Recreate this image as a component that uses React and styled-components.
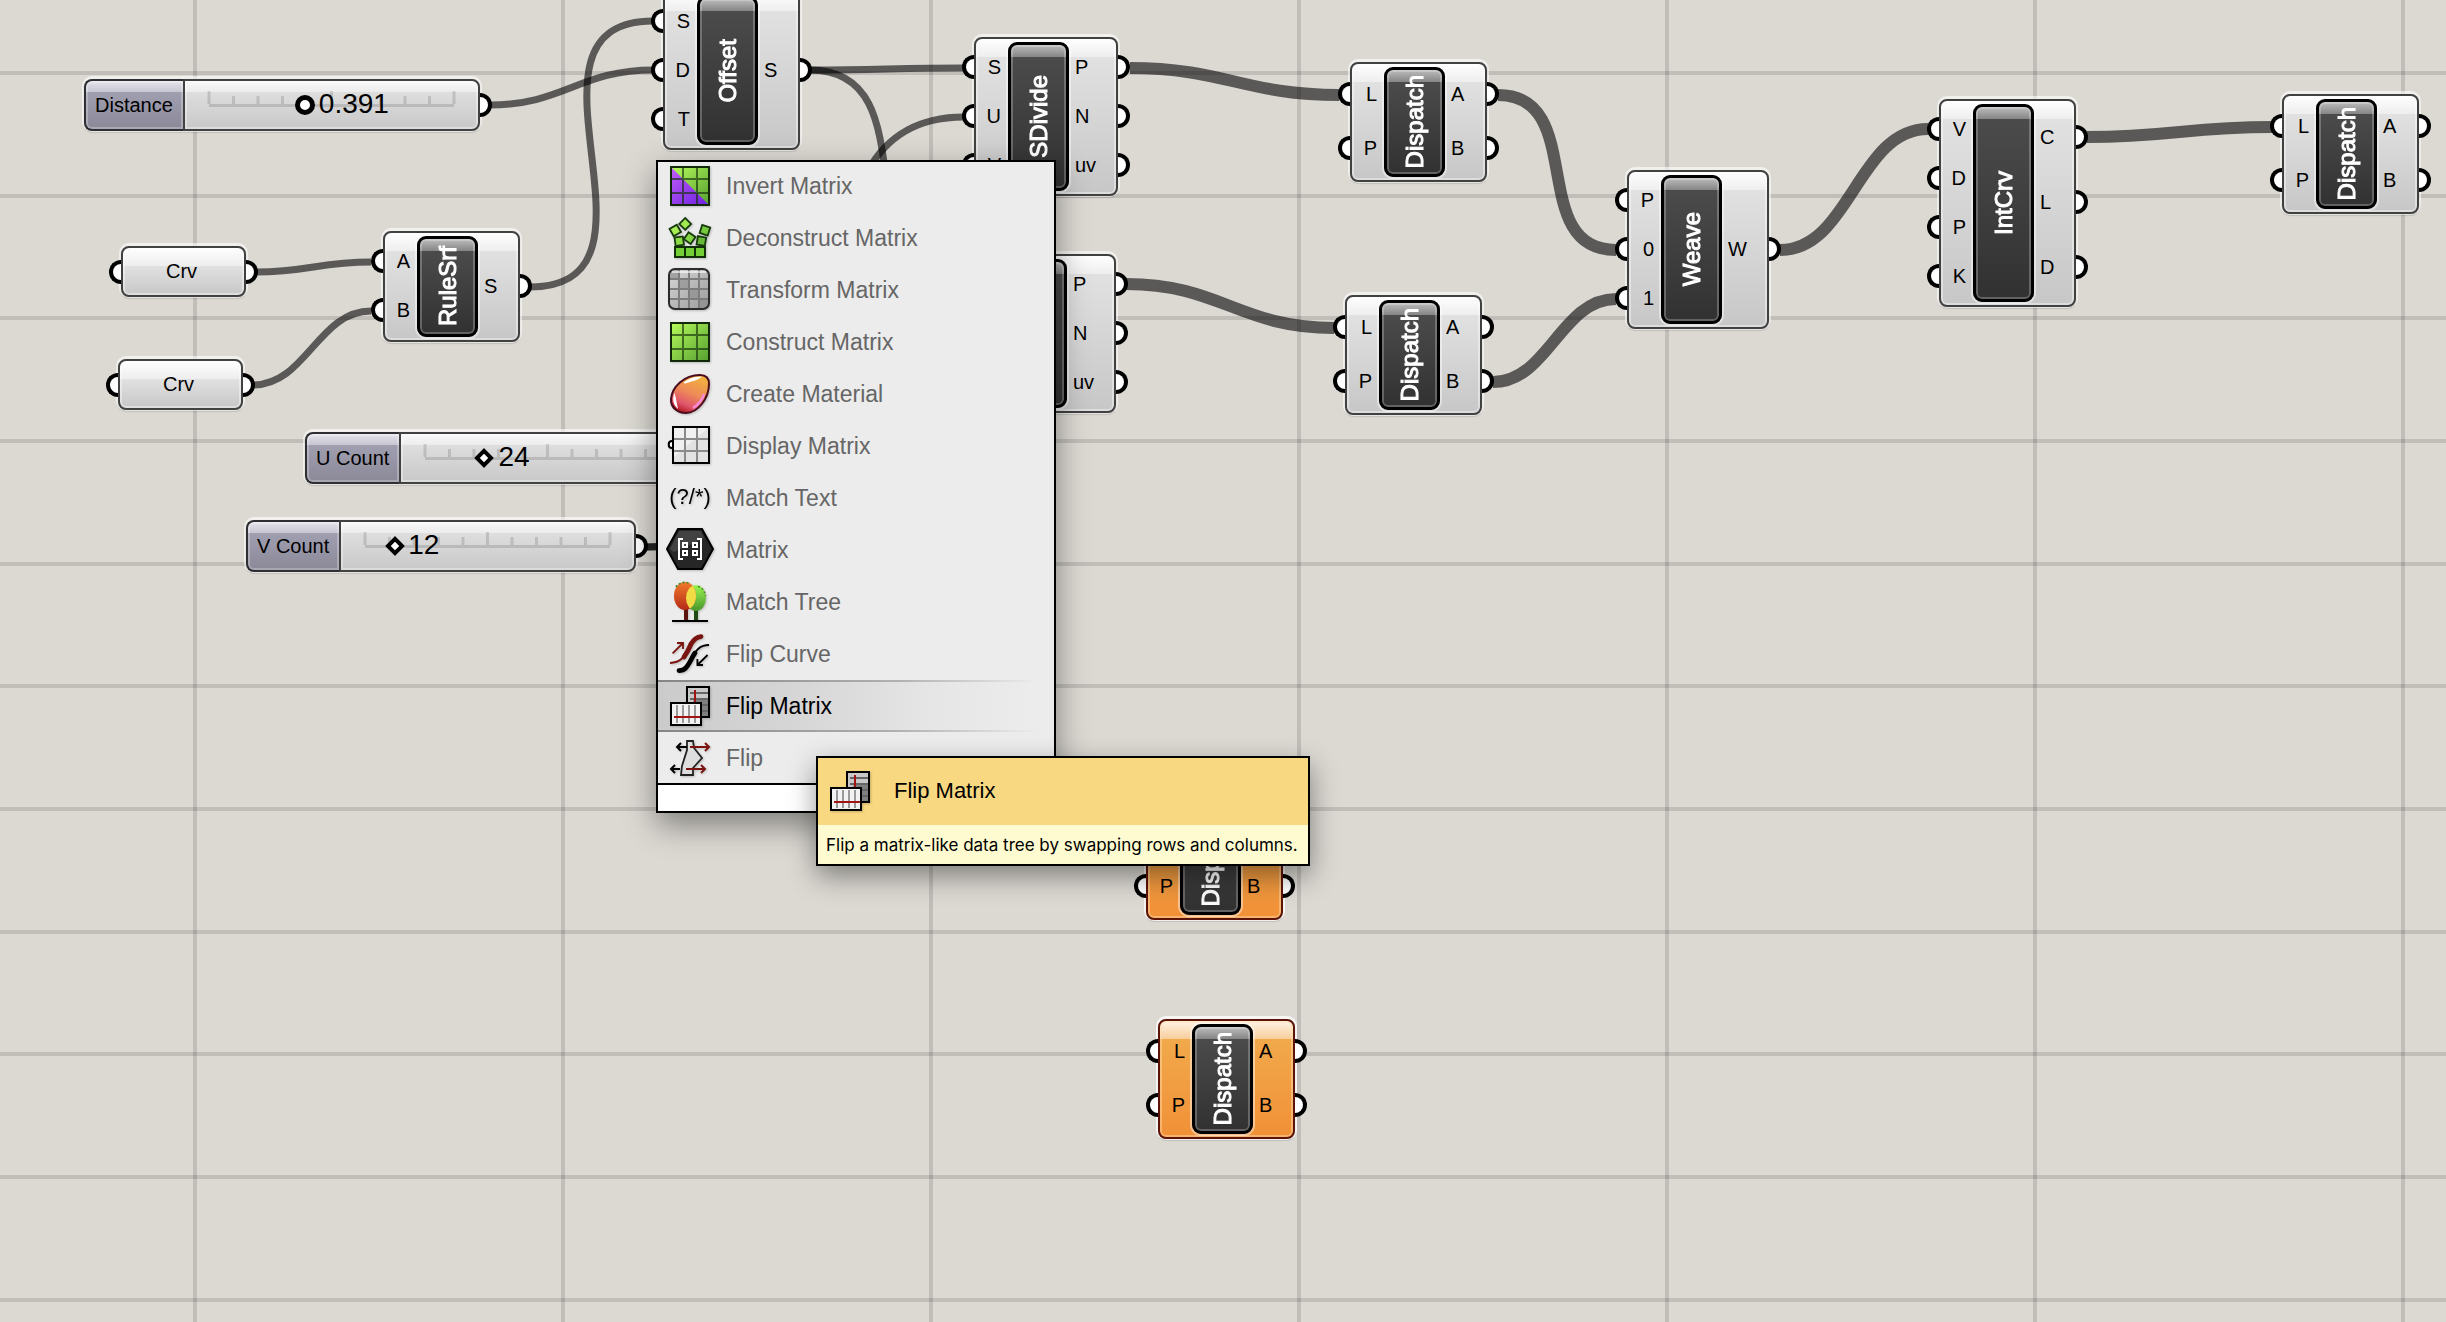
import React, { useState } from "react";
import styled, { createGlobalStyle, css } from "styled-components";

const GlobalStyle = createGlobalStyle`
  *, *::before, *::after { box-sizing: border-box; }
  body {
    margin: 0;
    background: #dcd9d3;
    font-family: "Liberation Sans", Arial, Helvetica, sans-serif;
    color: #000;
  }
`;

/* ---------- canvas ---------- */

const Canvas = styled.main`
  position: relative;
  width: 100%;
  height: 100vh;
  overflow: hidden;
  background: #dcd9d3;
`;

const Drawing = styled.svg`
  display: block;
  width: 100%;
  height: 100%;
`;

const OnCanvas = styled.section`
  position: absolute;
  left: ${(p) => p.$x}px;
  top: ${(p) => p.$y}px;
`;

/* ---------- component nodes ---------- */

const grey = css`
  border-color: #414141;
  background: linear-gradient(#fefefe 0, #eeeeee 18px, #e1e1e1 18px, #c7c7c7 100%);
  box-shadow:
    inset 0 0 0 2px rgba(255, 255, 255, 0.4),
    0 -1px 0 2px rgba(255, 255, 255, 0.6),
    0 1px 1px 1px rgba(0, 0, 0, 0.12);
`;

const orange = css`
  border-color: #5c1408;
  background: linear-gradient(#fff4e6 0, #f7cd9a 18px, #f1a94b 18px, #f19037 100%);
  box-shadow:
    inset 0 0 0 2px rgba(255, 225, 180, 0.45),
    0 -1px 0 2px rgba(255, 255, 255, 0.75),
    0 1px 1px 1px rgba(0, 0, 0, 0.12);
`;

const Body = styled.div`
  display: flex;
  height: ${(p) => p.$height}px;
  border: 2px solid;
  border-radius: 8px;
  ${(p) => (p.$selected ? orange : grey)}
`;

const Ports = styled.ul`
  display: flex;
  flex-direction: column;
  min-width: ${(p) => (p.$side === "in" ? 32 : 40)}px;
  margin: 0;
  padding: 3px 0 5px;
  list-style: none;
`;

const grip = css`
  content: "";
  position: absolute;
  top: 50%;
  width: 12px;
  height: 24px;
  margin-top: -12px;
  border: 4px solid #000;
  background: #fff;
`;

const gripLeft = css`
  ${grip}
  right: 100%;
  border-right: 0;
  border-radius: 12px 0 0 12px;
`;

const gripRight = css`
  ${grip}
  left: 100%;
  border-left: 0;
  border-radius: 0 12px 12px 0;
`;

const Port = styled.li`
  position: relative;
  display: flex;
  flex: 1;
  align-items: center;
  font-size: 20px;
  line-height: 24px;
  ${(p) =>
    p.$side === "in"
      ? css`
          justify-content: flex-end;
          margin-left: -2px;
          padding-right: 7px;
          &::before { ${gripLeft} }
        `
      : css`
          margin-right: -2px;
          padding: 0 22px 0 6px;
          &::after { ${gripRight} }
        `}
`;

const Core = styled.div`
  display: flex;
  align-items: center;
  justify-content: center;
  width: 61px;
  margin: 3px 0;
  border: 3px solid #000;
  border-radius: 9px;
  background: linear-gradient(#bdbdbd 0, #858585 12px, #4b4b4b 12px, #313131 100%);
  box-shadow:
    inset 0 0 0 2px rgba(255, 255, 255, 0.24),
    0 0 0 2px rgba(255, 255, 255, 0.45);
`;

const CoreName = styled.span`
  writing-mode: vertical-rl;
  transform: rotate(180deg);
  color: #fff;
  font-size: 24px;
  line-height: 28px;
  -webkit-text-stroke: 1px #fff;
`;

function Node({ x, y, height, name, inputs, outputs, selected }) {
  return (
    <OnCanvas $x={x} $y={y} aria-label={name}>
      <Body $height={height} $selected={selected}>
        <Ports $side="in">
          {inputs.map((port) => <Port key={port} $side="in">{port}</Port>)}
        </Ports>
        <Core><CoreName>{name}</CoreName></Core>
        <Ports $side="out">
          {outputs.map((port) => <Port key={port} $side="out">{port}</Port>)}
        </Ports>
      </Body>
    </OnCanvas>
  );
}

const ParamBody = styled.div`
  position: relative;
  display: flex;
  align-items: center;
  justify-content: center;
  width: 125px;
  height: 51px;
  padding-right: 4px;
  border: 2px solid;
  border-radius: 8px;
  font-size: 20px;
  ${grey}
  &::before { ${gripLeft} margin-right: 2px; }
  &::after { ${gripRight} margin-left: 2px; }
`;

/* ---------- number sliders ---------- */

const SliderBox = styled.div`
  position: relative;
  display: flex;
  height: 52px;
  border-radius: 8px;
  box-shadow: 0 -1px 0 2px rgba(255, 255, 255, 0.6), 0 1px 1px 1px rgba(0, 0, 0, 0.12);
  &::after { ${gripRight} }
`;

const SliderLabel = styled.label`
  display: flex;
  align-items: center;
  padding: 0 10px 0 9px;
  border: 2px solid #2e2e33;
  border-right: 0;
  border-radius: 8px 0 0 8px;
  background: linear-gradient(#e4e4ec 0, #c6c5d1 11px, #a09fb0 11px, #8b8998 100%);
  box-shadow: inset 0 0 0 2px rgba(255, 255, 255, 0.25);
  font-size: 20px;
  line-height: 24px;
`;

const Track = styled.div`
  position: relative;
  display: grid;
  place-items: center;
  width: 297px;
  border: 2px solid #414141;
  border-radius: 0 8px 8px 0;
  background: linear-gradient(#fafafa 0, #ececec 11px, #dedede 11px, #c8c8c8 100%);
  box-shadow: inset 0 0 0 2px rgba(255, 255, 255, 0.35);
`;

const Ticks = styled.svg`
  grid-area: 1 / 1;
  display: block;
  width: 249px;
  height: 34px;
`;

const thumbSize = { round: 20, diamond: 14 };

const Range = styled.input`
  grid-area: 1 / 1;
  appearance: none;
  width: ${(p) => 245 + thumbSize[p.$shape]}px;
  height: 32px;
  margin: 0;
  background: transparent;
  z-index: 1;
  &::-webkit-slider-thumb {
    appearance: none;
    width: ${(p) => thumbSize[p.$shape]}px;
    height: ${(p) => thumbSize[p.$shape]}px;
    border: ${(p) => (p.$shape === "round" ? 5 : 4)}px solid #000;
    border-radius: ${(p) => (p.$shape === "round" ? "50%" : "0")};
    background: #fff;
    transform: ${(p) => (p.$shape === "round" ? "none" : "rotate(45deg)")};
  }
`;

const Value = styled.output`
  position: absolute;
  top: 7px;
  font-size: 28px;
  line-height: 32px;
  pointer-events: none;
`;

function NumberSlider({ id, x, y, label, initial, max, step, shape }) {
  const [value, setValue] = useState(initial);
  return (
    <OnCanvas $x={x} $y={y}>
      <SliderBox>
        <SliderLabel htmlFor={id}>{label}</SliderLabel>
        <Track>
          <Ticks viewBox="0 0 249 34" aria-hidden="true">
            <g stroke="#000" strokeOpacity=".13" strokeWidth="3" fill="none">
              <path d="M2 17.500H247" />
              {Array.from({ length: 11 }, (_, i) => (
                <path key={i} d={`M${2 + i * 24.5} ${i % 5 ? 8 : 3}V16`} />
              ))}
            </g>
          </Ticks>
          <Range
            id={id}
            type="range"
            min="0"
            max={max}
            step={step}
            value={value}
            $shape={shape}
            onChange={(e) => setValue(e.target.value)}
          />
          <Value htmlFor={id} style={{ left: 38 + Math.round((value / max) * 245) }}>{value}</Value>
        </Track>
      </SliderBox>
    </OnCanvas>
  );
}

/* ---------- wires ---------- */

const gridColumns = [195, 563, 931, 1299, 1667, 2035, 2403];
const gridRows = [73, 196, 318, 441, 564, 686, 809, 932, 1054, 1177, 1300];

const wires = [
  { from: [490, 105], to: [653, 70] },
  { from: [256, 272], to: [371, 262] },
  { from: [253, 385], to: [371, 311] },
  { from: [530, 287], to: [653, 21] },
  { from: [810, 70], to: [964, 68] },
  { from: [810, 70], to: [962, 284] },
  { from: [706, 459], to: [964, 117] },
  { from: [646, 547], to: [964, 166] },
  { from: [646, 547], to: [962, 382] },
  { from: [1130, 68], to: [1339, 95], list: true },
  { from: [1126, 284], to: [1334, 328], list: true },
  { from: [1498, 95], to: [1616, 250], list: true },
  { from: [1493, 382], to: [1616, 299], list: true },
  { from: [1780, 250], to: [1928, 129], list: true },
  { from: [2087, 137], to: [2272, 127], list: true },
];

function wirePath([x1, y1], [x2, y2]) {
  const reach = Math.round(Math.max((x2 - x1) * 0.45, Math.abs(y2 - y1) * 0.58));
  return `M${x1} ${y1}C${x1 + reach} ${y1} ${x2 - reach} ${y2} ${x2} ${y2}`;
}

/* ---------- icons ---------- */

const Glyph = styled.svg`
  display: block;
  flex: none;
  width: 48px;
  height: 48px;
  filter: drop-shadow(1px 1px 1px rgba(0, 0, 0, 0.2));
`;

function GreenGrid() {
  return (
    <>
      <defs>
        <linearGradient id="leaf" x1="0" y1="0" x2="1" y2="1">
          <stop offset="0" stopColor="#b8fb5c" />
          <stop offset="1" stopColor="#559f30" />
        </linearGradient>
      </defs>
      <rect x="2.5" y="2.5" width="19" height="19" fill="url(#leaf)" />
    </>
  );
}

const gridLines = (
  <>
    <path d="M8.5 3V21M15.5 3V21M3 8.5H21M3 15.5H21" stroke="#14300a" strokeOpacity=".65" />
    <rect x="2.5" y="2.5" width="19" height="19" fill="none" stroke="#12280a" />
  </>
);

function Block({ x, y, turn, fill }) {
  return (
    <rect
      x={x - 2}
      y={y - 2}
      width="4.2"
      height="4.2"
      transform={`rotate(${turn} ${x} ${y})`}
      fill={fill}
      stroke="#173a0c"
      strokeWidth=".9"
    />
  );
}

const icons = {
  invert: (
    <>
      <GreenGrid />
      <defs>
        <linearGradient id="violet" x1="0" y1="0" x2="1" y2="1">
          <stop offset="0" stopColor="#c05cf8" />
          <stop offset="1" stopColor="#6d22e0" />
        </linearGradient>
      </defs>
      <path d="M3 3L21 21H3Z" fill="url(#violet)" />
      {gridLines}
    </>
  ),
  deconstruct: (
    <>
      <Block x={4.5} y={8.2} turn={-30} fill="#a6ee54" />
      <Block x={9.6} y={4.8} turn={45} fill="#a0ea50" />
      <Block x={19.4} y={8} turn={18} fill="#76c83e" />
      <Block x={6.500} y={13.5} turn={-8} fill="#8cdc46" />
      <Block x={17.6} y={13.4} turn={10} fill="#68b838" />
      <Block x={11.8} y={11.9} turn={35} fill="#84d444" />
      <path d="M4.5 16.5H19.5V21.5H4.5Z" fill="#74cf36" stroke="#12300a" />
      <path d="M9.5 16.5V21.5M14.5 16.5V21.5" stroke="#12300a" />
    </>
  ),
  transform: (
    <>
      <defs>
        <linearGradient id="steel" x1="0" y1="0" x2="1" y2="1">
          <stop offset="0" stopColor="#d8d8d8" />
          <stop offset="1" stopColor="#9a9a9a" />
        </linearGradient>
      </defs>
      <rect x="1.5" y="1.5" width="20" height="20" rx="3" fill="url(#steel)" />
      <path d="M2 2H6.500V6H2ZM7 7H11V11H7ZM12 12H16.500V16H12ZM17 17H21V21H17Z" fill="#8f8f8f" opacity=".7" />
      <path d="M6.500 2V21M11.500 2V21M16.500 2V21M2 6.500H21M2 11.500H21M2 16.500H21" stroke="#7c7c7c" />
      <path d="M3 3H20" stroke="#fff" opacity=".6" />
      <rect x="1.5" y="1.5" width="20" height="20" rx="3" fill="none" stroke="#2c2c2c" />
    </>
  ),
  construct: (
    <>
      <GreenGrid />
      {gridLines}
    </>
  ),
  material: (
    <>
      <defs>
        <linearGradient id="amber" x1=".8" y1="0" x2=".35" y2="1">
          <stop offset="0" stopColor="#f0b53a" />
          <stop offset=".5" stopColor="#ee8a58" />
          <stop offset=".8" stopColor="#e0566c" />
          <stop offset="1" stopColor="#b51b27" />
        </linearGradient>
      </defs>
      <path
        d="M2.500 14.500C3 8.500 9 2.500 17 2.500C20 2.500 21.500 4 21.500 7C21.500 14 16 21.500 10 21.500C5.500 21.500 2.200 18.500 2.500 14.500Z"
        fill="url(#amber)"
        stroke="#4a0c1c"
      />
      <path d="M9 6.500C11.500 4.500 14 3.600 17 3.700C15 5 12 5.600 9 6.500Z" fill="#fff" stroke="#fff" strokeWidth=".6" />
      <path d="M4.200 12.500C3.500 15 4 17 5.500 18.500C5 16.500 4.800 14.500 4.200 12.500Z" fill="#fff" stroke="#fff" strokeWidth=".6" />
      <path d="M13.500 19C16 17.500 18 15 19 12" stroke="#f58ad8" strokeWidth="1.200" fill="none" />
    </>
  ),
  display: (
    <>
      <path d="M3 9.500C.8 9.500.8 13 3 13" fill="#fff" stroke="#000" />
      <rect x="3.500" y="2.500" width="18" height="18" fill="#f0f0f0" />
      <path d="M4 17.500L21 3V20H4Z" fill="#d4d4d4" opacity=".5" />
      <path d="M9.500 3V20M15.500 3V20M4 8.500H21M4 14.500H21" stroke="#8a8a8a" />
      <rect x="3.500" y="2.500" width="18" height="18" fill="none" stroke="#000" />
    </>
  ),
  text: (
    <text
      x="12"
      y="15"
      textAnchor="middle"
      fontFamily='"Liberation Sans", Arial, sans-serif'
      fontSize="11"
    >
      (?/*)
    </text>
  ),
  matrix: (
    <>
      <path d="M6 1.500H18L23.500 11.500L18 21.500H6L.5 11.500Z" fill="#262626" stroke="#000" />
      <path d="M6.500 2.500H17.500L19 6L4 13L2 11.500Z" fill="#fff" opacity=".13" />
      <path d="M8.500 6.500H6.500V16.500H8.500M15.500 6.500H17.500V16.500H15.500" stroke="#fff" fill="none" />
      <path d="M8.500 8.500H10.500V10.500H8.500ZM13.500 8.500H15.500V10.500H13.500ZM8.500 12.500H10.500V14.500H8.500ZM13.500 12.500H15.500V14.500H13.500Z" stroke="#fff" fill="none" />
    </>
  ),
  tree: (
    <>
      <defs>
        <linearGradient id="rust" x1="0" y1="0" x2="0" y2="1">
          <stop offset="0" stopColor="#f07a2c" />
          <stop offset="1" stopColor="#b52a16" />
        </linearGradient>
        <linearGradient id="lime" x1="0" y1="0" x2="0" y2="1">
          <stop offset="0" stopColor="#9bf552" />
          <stop offset="1" stopColor="#48962c" />
        </linearGradient>
        <clipPath id="crown"><ellipse cx="9.500" cy="9" rx="5.500" ry="7" /></clipPath>
      </defs>
      <path d="M3 21.500H21" stroke="#000" />
      <path d="M10 14V21" stroke="#5a120c" strokeWidth="2" />
      <path d="M15 15V21" stroke="#1f4a14" strokeWidth="2" />
      <ellipse cx="15" cy="10" rx="5" ry="6.500" fill="url(#lime)" />
      <ellipse cx="9.500" cy="9" rx="5.500" ry="7" fill="url(#rust)" />
      <ellipse cx="15" cy="10" rx="5" ry="6.500" fill="#f2dc46" clipPath="url(#crown)" />
      <path d="M5 4.500C6.500 2.200 9.500 1.600 12 2.800M16 4.200C18.500 5 19.500 7 19.700 9" stroke="#4b8a24" strokeWidth=".8" strokeDasharray="1 1" fill="none" />
    </>
  ),
  curve: (
    <>
      <path d="M2 16.500C8 16.500 10 12 12 8.500C13.500 5 15 3 18.500 3" stroke="#7a1410" strokeWidth="1" fill="none" />
      <path d="M9 13.500C10.500 11.500 11.500 9.500 12.500 7C14 4.500 15.500 3.500 17.500 3.300" stroke="#7a1410" strokeWidth="2.400" strokeLinecap="round" fill="none" />
      <path d="M6.500 20.500C10.500 20.500 11.500 17 13 14C15 10 17 7.500 21.500 7.500" stroke="#000" strokeWidth="1" fill="none" />
      <path d="M6.500 20.300C10 20.300 11 17.500 12.500 15C13.500 13 14 12 14.500 11.500" stroke="#000" strokeWidth="2.400" strokeLinecap="round" fill="none" />
      <path d="M3.300 11.700L8.500 6.500M5.500 6.500H8.500V9.500" stroke="#7a1410" strokeWidth=".9" fill="none" />
      <path d="M20.800 12.500L15.700 17.500M15.700 14.500V17.500H18.500" stroke="#000" strokeWidth=".9" fill="none" />
    </>
  ),
  flipMatrix: (
    <>
      <rect x="10.500" y="2.500" width="11" height="15" fill="#c8c8c8" />
      <path d="M14 8H21V17H12Z" fill="#444" opacity=".55" />
      <path d="M12 5.500H21M12 8.500H21M12 11.500H21M12 14.500H21" stroke="#666" />
      <path d="M14.500 4V10" stroke="#a01414" />
      <rect x="10.500" y="2.500" width="11" height="15" fill="none" stroke="#000" />
      <rect x="2.500" y="10.500" width="15" height="11" fill="#f2f2f2" stroke="#000" />
      <path d="M5.500 11.500V20.500M8.500 11.500V20.500M11.500 11.500V20.500M14.500 11.500V20.500" stroke="#9a9a9a" />
      <path d="M4 17.500H17" stroke="#a01414" />
    </>
  ),
  flip: (
    <>
      <path d="M10.500 3.500H13.500L14 7L18 12L13.500 17V20.500H7.500L8 16L10.500 8Z" fill="#dedede" stroke="#222" strokeWidth=".9" />
      <path d="M10.500 6.500H5.500M7.500 4.500L5.500 6.500L7.500 8.500M7 17.500H2.500M4.500 15.500L2.500 17.500L4.500 19.500" stroke="#000" fill="none" />
      <path d="M12 6.500H21.500M19.500 4.500L21.500 6.500L19.500 8.500M10 17.500H19.500M17.500 15.500L19.500 17.500L17.500 19.500" stroke="#7a1410" fill="none" />
    </>
  ),
};

function Icon({ name }) {
  return <Glyph viewBox="0 0 24 24" aria-hidden="true">{icons[name]}</Glyph>;
}

/* ---------- search menu ---------- */

const Menu = styled.div`
  position: absolute;
  left: 656px;
  top: 160px;
  width: 400px;
  border: 2px solid #000;
  background: #ececec;
  box-shadow: 0 12px 30px rgba(0, 0, 0, 0.42);
`;

const Results = styled.ul`
  display: flex;
  flex-direction: column;
  gap: 4px;
  margin: 0;
  padding: 0 0 1px;
  list-style: none;
`;

const Result = styled.button`
  position: relative;
  display: flex;
  align-items: center;
  gap: 12px;
  width: 100%;
  height: 48px;
  padding: 0 8px;
  border: 0;
  background: ${(p) =>
    p.$active ? "linear-gradient(90deg, #cbcbcb, #d6d6d6 35%, #e6e6e6 70%, #ececec 95%)" : "transparent"};
  color: ${(p) => (p.$active ? "#000" : "#666")};
  font-family: inherit;
  font-size: 23px;
  line-height: 28px;
  text-align: left;
  ${(p) =>
    p.$active &&
    css`
      &::before, &::after {
        content: "";
        position: absolute;
        left: 0;
        right: 0;
        height: 2px;
        background: linear-gradient(90deg, #858585, #b0b0b0 60%, #ececec 96%);
      }
      &::before { bottom: 100%; }
      &::after { top: 100%; }
    `}
`;

const Search = styled.input`
  display: block;
  width: 100%;
  height: 28px;
  padding: 0 8px;
  border: 0;
  border-top: 2px solid #000;
  background: #fff;
  font-family: inherit;
  font-size: 20px;
  outline: 0;
`;

const results = [
  ["Invert Matrix", "invert"],
  ["Deconstruct Matrix", "deconstruct"],
  ["Transform Matrix", "transform"],
  ["Construct Matrix", "construct"],
  ["Create Material", "material"],
  ["Display Matrix", "display"],
  ["Match Text", "text"],
  ["Matrix", "matrix"],
  ["Match Tree", "tree"],
  ["Flip Curve", "curve"],
  ["Flip Matrix", "flipMatrix"],
  ["Flip", "flip"],
];

/* ---------- tooltip ---------- */

const Tip = styled.aside`
  position: absolute;
  left: 816px;
  top: 756px;
  width: 494px;
  border: 2px solid #000;
  background: #fefbd0;
  box-shadow: 0 10px 26px rgba(0, 0, 0, 0.42);
`;

const TipTitle = styled.header`
  display: flex;
  align-items: center;
  gap: 20px;
  height: 67px;
  padding: 0 8px 2px;
  background: #f8d880;
  font-size: 22px;
  line-height: 28px;
`;

const TipText = styled.p`
  margin: 0;
  padding: 10px 8px 9px;
  font-family: Inter, "Open Sans", sans-serif;
  font-size: 17px;
  line-height: 20px;
  white-space: nowrap;
`;

export default function App() {
  return (
    <Canvas>
      <GlobalStyle />
      <Drawing aria-hidden="true">
        <g stroke="#000" strokeOpacity=".12" strokeWidth="4">
          {gridColumns.map((x) => <line key={x} x1={x} x2={x} y1="0" y2="100%" />)}
          {gridRows.map((y) => <line key={y} x1="0" x2="100%" y1={y} y2={y} />)}
        </g>
        <g stroke="#000" strokeOpacity=".59" fill="none">
          {wires.map((w, i) => (
            <path key={i} d={wirePath(w.from, w.to)} strokeWidth={w.list ? 12 : 7} />
          ))}
        </g>
      </Drawing>

      <NumberSlider id="distance" x={84} y={79} label="Distance" initial={0.391} max={1} step={0.001} shape="round" />
      <NumberSlider id="u-count" x={305} y={432} label="U Count" initial={24} max={100} step={1} shape="diamond" />
      <NumberSlider id="v-count" x={246} y={520} label="V Count" initial={12} max={100} step={1} shape="diamond" />

      <OnCanvas $x={121} $y={246}><ParamBody>Crv</ParamBody></OnCanvas>
      <OnCanvas $x={118} $y={359}><ParamBody>Crv</ParamBody></OnCanvas>

      <Node x={383} y={231} height={111} name="RuleSrf" inputs={["A", "B"]} outputs={["S"]} />
      <Node x={663} y={-9} height={159} name="Offset" inputs={["S", "D", "T"]} outputs={["S"]} />
      <Node x={974} y={37} height={159} name="SDivide" inputs={["S", "U", "V"]} outputs={["P", "N", "uv"]} />
      <Node x={972} y={254} height={159} name="SDivide" inputs={["S", "U", "V"]} outputs={["P", "N", "uv"]} />
      <Node x={1350} y={62} height={120} name="Dispatch" inputs={["L", "P"]} outputs={["A", "B"]} />
      <Node x={1345} y={295} height={120} name="Dispatch" inputs={["L", "P"]} outputs={["A", "B"]} />
      <Node x={1627} y={170} height={159} name="Weave" inputs={["P", "0", "1"]} outputs={["W"]} />
      <Node x={1939} y={99} height={208} name="IntCrv" inputs={["V", "D", "P", "K"]} outputs={["C", "L", "D"]} />
      <Node x={2282} y={94} height={120} name="Dispatch" inputs={["L", "P"]} outputs={["A", "B"]} />
      <Node x={1146} y={800} height={120} name="Dispatch" inputs={["L", "P"]} outputs={["A", "B"]} selected />
      <Node x={1158} y={1019} height={120} name="Dispatch" inputs={["L", "P"]} outputs={["A", "B"]} selected />

      <Menu>
        <Results>
          {results.map(([label, icon]) => (
            <li key={label}>
              <Result type="button" $active={label === "Flip Matrix"}>
                <Icon name={icon} />
                {label}
              </Result>
            </li>
          ))}
        </Results>
        <Search type="text" aria-label="Search components" />
      </Menu>

      <Tip role="tooltip">
        <TipTitle>
          <Icon name="flipMatrix" />
          Flip Matrix
        </TipTitle>
        <TipText>Flip a matrix-like data tree by swapping rows and columns.</TipText>
      </Tip>
    </Canvas>
  );
}
